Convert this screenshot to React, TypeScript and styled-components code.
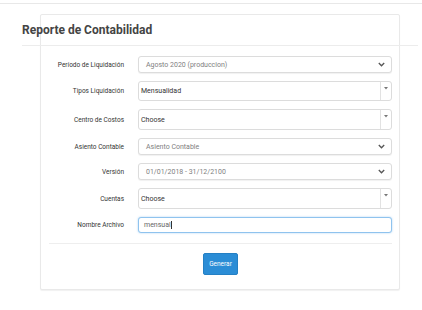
import { Fragment } from "react";
import styled, { createGlobalStyle, css } from "styled-components";

const GlobalStyle = createGlobalStyle`
    body {
        margin: 0;
        background: #ffffff;
        font-family: Roboto, "Liberation Sans", Arial, sans-serif;
    }
`;

const TopBar = styled.div`
    height: 3px;
    border-bottom: 1px solid #e8e8e8;
`;

const Page = styled.div`
    padding: 10px 22px 20px 40px;
`;

const Card = styled.section`
    border: 1px solid #e9e9e9;
    border-radius: 2px;
    padding: 0 7px 14px 8px;
    box-shadow: 0 1px 1px rgba(0, 0, 0, 0.06);
    background: #ffffff;
`;

const Header = styled.div`
    margin: 0 -26px 0 -27px;
    padding: 7px 0 7px 0;
    border-bottom: 1px solid #ececec;
`;

const Title = styled.h3`
    margin: 0;
    font-size: 12px;
    line-height: 16px;
    font-weight: 700;
    color: #444444;
`;

const Form = styled.div`
    margin-top: 10px;
    display: grid;
    grid-template-columns: 75px 1fr;
    column-gap: 14px;
    row-gap: 8px;
    align-items: center;
`;

const Label = styled.label`
    text-align: right;
    font-size: 6.5px;
    font-weight: 400;
    color: #333333;
    white-space: nowrap;
`;

const controlBase = css`
    box-sizing: border-box;
    display: flex;
    align-items: center;
    border: 1px solid #dcdcdc;
    border-radius: 3px;
    background: #ffffff;
    font-size: 7px;
`;

const Select = styled.div`
    ${controlBase};
    height: 17px;
    padding: 0 6px 0 7px;
    color: #808080;
    box-shadow: 0 1px 1px rgba(0, 0, 0, 0.06);
    span {
        flex: 1;
    }
`;

const Chosen = styled.div<{ $h: number }>`
    ${controlBase};
    height: ${(p) => p.$h}px;
    padding-left: 2px;
    color: #333333;
    span {
        flex: 1;
    }
`;

const ChosenArrow = styled.div`
    align-self: stretch;
    width: 11px;
    border-left: 1px solid #e2e2e2;
    display: flex;
    justify-content: center;
    padding-top: 5px;
    box-sizing: border-box;
`;

const TextInput = styled.div`
    ${controlBase};
    height: 16px;
    padding-left: 5px;
    border-color: #8fc3ee;
    box-shadow: 0 0 2px rgba(102, 175, 233, 0.6);
    color: #666666;
`;

const Caret = styled.i`
    display: inline-block;
    width: 1px;
    height: 8px;
    background: #333333;
    margin-left: 0.5px;
`;

const Divider = styled.div`
    margin-top: 10px;
    border-top: 1px solid #eeeeee;
`;

const Actions = styled.div`
    display: flex;
    justify-content: center;
    padding-top: 9px;
`;

const Button = styled.button`
    width: 35px;
    height: 22px;
    padding: 0;
    border: 1px solid #2580c4;
    border-radius: 2px;
    background: #2b8dd6;
    color: #ffffff;
    font-family: inherit;
    font-size: 6.5px;
`;

const Chevron = () => (
    <svg width="7" height="5" viewBox="0 0 7 5">
        <path d="M0.8 1 L3.5 3.8 L6.2 1" fill="none" stroke="#555" strokeWidth="1.3" />
    </svg>
);

const Tri = () => (
    <svg width="4" height="3" viewBox="0 0 4 3">
        <path d="M0 0 H4 L2 2.5 Z" fill="#777" />
    </svg>
);

type Row =
    | { label: string; kind: "select"; value: string }
    | { label: string; kind: "chosen"; value: string; h: number }
    | { label: string; kind: "text"; value: string };

const rows: Row[] = [
    { label: "Período de Liquidación", kind: "select", value: "Agosto 2020 (produccion)" },
    { label: "Tipos Liquidación", kind: "chosen", value: "Mensualidad", h: 20 },
    { label: "Centro de Costos", kind: "chosen", value: "Choose", h: 21 },
    { label: "Asiento Contable", kind: "select", value: "Asiento Contable" },
    { label: "Versión", kind: "select", value: "01/01/2018 - 31/12/2100" },
    { label: "Cuentas", kind: "chosen", value: "Choose", h: 21 },
    { label: "Nombre Archivo", kind: "text", value: "mensual" },
];

export default function App() {
    return (
        <>
            <GlobalStyle />
            <TopBar />
            <Page>
                <Card>
                    <Header>
                        <Title>Reporte de Contabilidad</Title>
                    </Header>
                    <Form>
                        {rows.map((r) => (
                            <Fragment key={r.label}>
                                <Label>{r.label}</Label>
                                {r.kind === "select" && (
                                    <Select>
                                        <span>{r.value}</span>
                                        <Chevron />
                                    </Select>
                                )}
                                {r.kind === "chosen" && (
                                    <Chosen $h={r.h}>
                                        <span>{r.value}</span>
                                        <ChosenArrow>
                                            <Tri />
                                        </ChosenArrow>
                                    </Chosen>
                                )}
                                {r.kind === "text" && (
                                    <TextInput>
                                        {r.value}
                                        <Caret />
                                    </TextInput>
                                )}
                            </Fragment>
                        ))}
                    </Form>
                    <Divider />
                    <Actions>
                        <Button>Generar</Button>
                    </Actions>
                </Card>
            </Page>
        </>
    );
}
